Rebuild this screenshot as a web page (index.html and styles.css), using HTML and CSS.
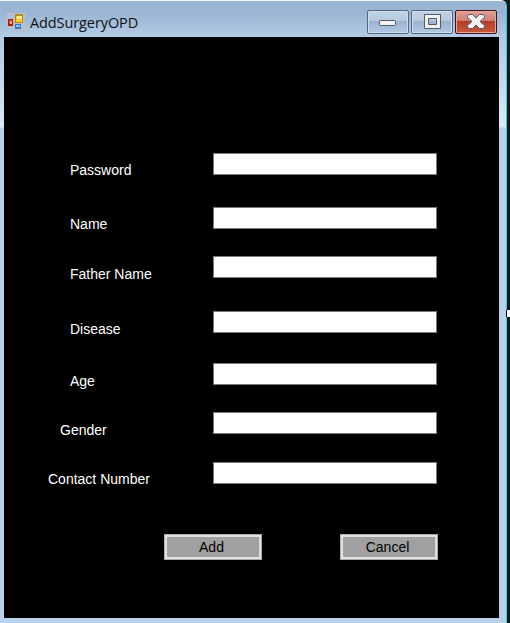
FILE: index.html
```html
<!DOCTYPE html>
<html lang="en">
<head>
<meta charset="utf-8">
<title>AddSurgeryOPD</title>
<link rel="stylesheet" href="styles.css">
</head>
<body>
<main class="window">
  <header class="titlebar">
    <svg class="app-icon" width="18" height="18" viewBox="0 0 18 18" shape-rendering="crispEdges">
      <path fill="#b9bfc5" d="M0 0h18v18H7v-4H0z"/>
      <path fill="#a9c4df" d="M1 1h5v4H1z"/>
      <path fill="#a81e15" d="M1 6h5v7H1z"/>
      <path fill="#d0473c" d="M2 7h3v4H2z"/>
      <path fill="#f4a69a" d="M3 8h2v3H3z"/>
      <path fill="#b68a12" d="M8 1h8v9H8z"/>
      <path fill="#f7c93c" d="M9 3h6v6H9z"/>
      <path fill="#ffe88c" d="M10 3h5v3h-5z"/>
      <path fill="#3c75cf" d="M8 11h6v5H8z"/>
      <path fill="#8dbcf7" d="M9 12h4v2H9z"/>
    </svg>
    <h1 class="title">AddSurgeryOPD</h1>
    <div class="controls">
      <button class="control" type="button" aria-label="Minimize">
        <svg class="minimize-icon" width="18" height="6" viewBox="0 0 18 6"><rect x=".5" y=".5" width="16" height="5" rx=".7" fill="#f4f4f4" stroke="#555b6b"/></svg>
      </button>
      <button class="control" type="button" aria-label="Maximize">
        <svg width="18" height="16" viewBox="0 0 18 16"><path d="M1.500 .5h16v14h-16zM5.500 4.500v6h8v-6z" fill="#f0f0f0" fill-rule="evenodd" stroke="#555b6b"/></svg>
      </button>
      <button class="control control-close" type="button" aria-label="Close">
        <svg width="18" height="16" viewBox="0 0 18 16"><path d="M2 .5h3.500l3.500 3.500 3.500-3.500H16l1.500 1.500v1.500l-4.500 4 4.500 4v1.500L16 14.500h-3.500L9 11l-3.500 3.500H2L.5 13v-1.500l4.500-4-4.500-4V2z" fill="#f2f2f2" stroke="#555b6b"/></svg>
      </button>
    </div>
  </header>
  <form class="client">
    <div class="fields">
      <label class="label" for="password">Password</label><input class="input" id="password">
      <label class="label" for="name">Name</label><input class="input" id="name">
      <label class="label label-low" for="father">Father Name</label><input class="input" id="father">
      <label class="label label-low" for="disease">Disease</label><input class="input" id="disease">
      <label class="label label-low" for="age">Age</label><input class="input" id="age">
      <label class="label label-low label-gender" for="gender">Gender</label><input class="input" id="gender">
      <label class="label label-contact" for="contact">Contact Number</label><input class="input" id="contact">
    </div>
    <div class="actions">
      <button class="action" type="button">Add</button>
      <button class="action" type="button">Cancel</button>
    </div>
  </form>
  <span class="handle"></span>
</main>
</body>
</html>
```
FILE: styles.css
```css
* { box-sizing: border-box; }
body {
  margin: 0;
  background: #151515;
  font: 14px/16px "Liberation Sans", Arial, sans-serif;
}
.window {
  position: relative;
  width: 507px;
  height: 623px;
  padding: 0 7px 5px 4px;
  border-right: 1px solid #1fd4f2;
  border-top: 1px solid #f4f7fa;
  border-top-right-radius: 6px;
  background: linear-gradient(#9ab5d3 0, #9ab5d3 12px, #b3cbe5 36px, #c3d6ea 75px, #dfe9f5 126px, #b9d1ea 127px);
}
.titlebar {
  display: flex;
  align-items: flex-start;
  height: 36px;
  padding-left: 3px;
}
.app-icon { margin-top: 12px; }
.title {
  margin: 12px 0 0 5px;
  color: #111;
  font: 14.5px/20px "Open Sans", "Noto Sans", sans-serif;
  letter-spacing: -0.1px;
}
.controls {
  display: flex;
  gap: 2px;
  margin: 9px 2px 0 auto;
}
.control {
  display: flex;
  align-items: center;
  justify-content: center;
  width: 42px;
  height: 24px;
  padding: 0;
  border: 1px solid #56657e;
  border-radius: 2px;
  background: linear-gradient(#c0d3e7 0, #b4c9e0 45%, #98b2cf 46%, #b0c9e4 100%);
  box-shadow: inset 0 0 0 1px #cfdeed;
}
.control-close {
  border-color: #48101b;
  background: linear-gradient(#dfa196 0, #cd7c6d 45%, #b43b28 46%, #c65a40 100%);
  box-shadow: inset 0 0 0 1px #e0a79c;
}
.minimize-icon { margin-top: 2px; }
.client {
  height: 581px;
  padding: 116px 0 0 44px;
  background: #000;
}
.fields {
  display: grid;
  grid-template-columns: 165px 224px;
  grid-template-rows: 54px 49px 55px 52px 49px 50px 22px;
  align-items: start;
}
.label { margin: 9px 0 0 22px; color: #fff; }
.label-low { margin-top: 10px; }
.label-gender { margin-left: 12px; }
.label-contact { margin-left: 0; }
.input {
  width: 224px;
  height: 22px;
  border: 1px solid #7a7a7a;
  background: #fff;
}
.actions {
  display: flex;
  gap: 78px;
  margin: 50px 0 0 116px;
}
.action {
  width: 98px;
  height: 26px;
  padding: 0 3px 0 0;
  border: 1px solid #adadad;
  background: #a0a0a0;
  box-shadow: inset 0 0 0 2px #e1e1e1;
  color: #000;
  font: inherit;
}
.handle {
  position: absolute;
  top: 309px;
  left: 506px;
  width: 4px;
  height: 7px;
  border-left: 1px solid #000;
  background: #fff;
}
```
